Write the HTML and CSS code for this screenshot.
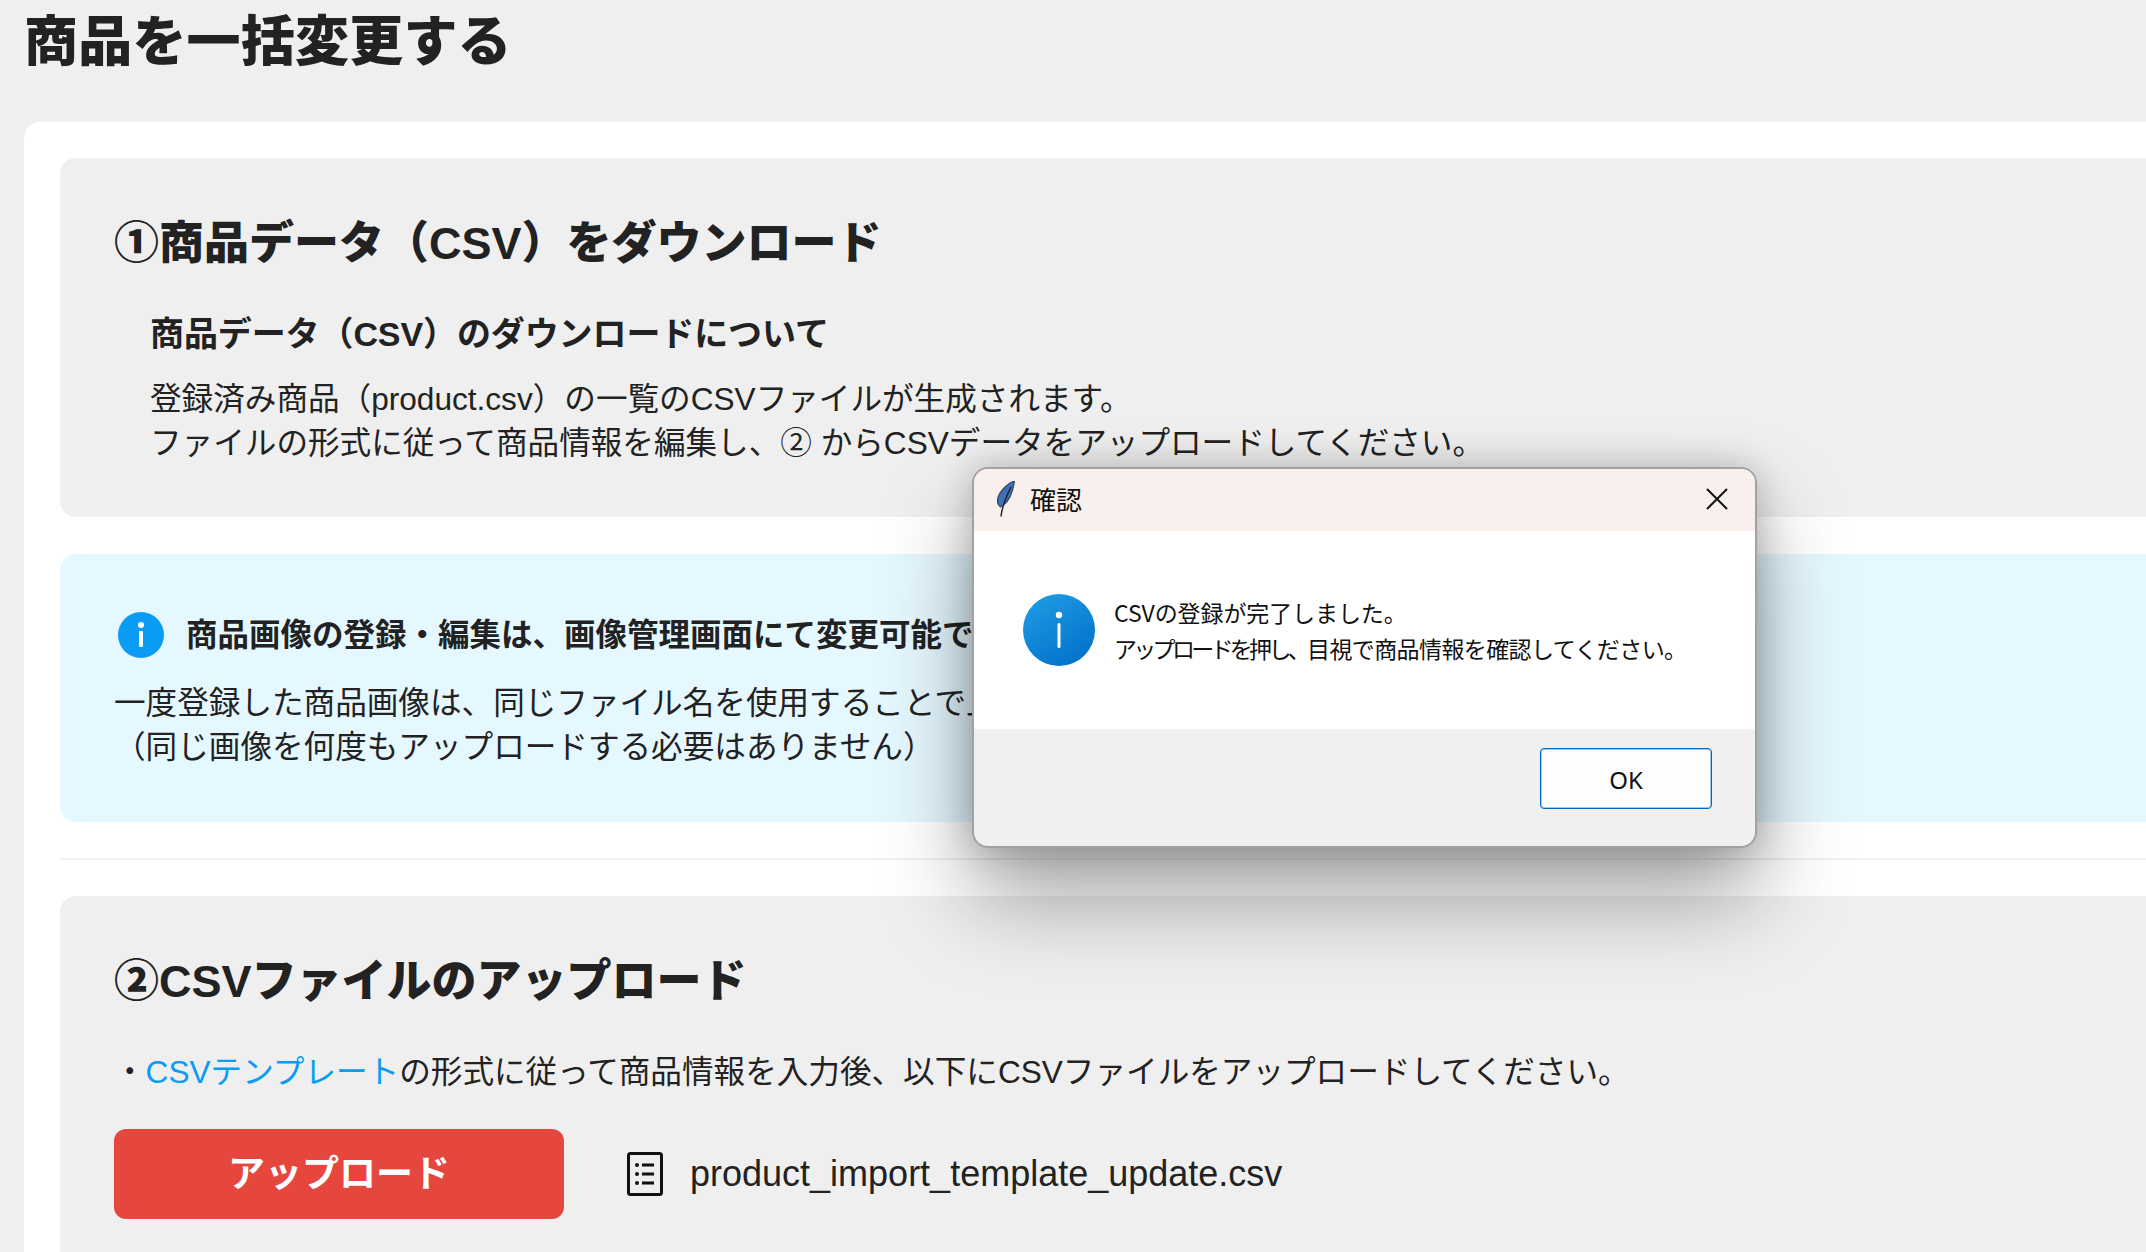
FILE: index.html
```html
<!DOCTYPE html>
<html lang="ja">
<head>
<meta charset="utf-8">
<title>商品を一括変更する</title>
<link rel="stylesheet" href="styles.css">
</head>
<body>
<div class="page">
  <h1 class="page-title">商品を一括変更する</h1>
  <main class="card">
    <section class="panel panel-download">
      <h2 class="panel-title">①商品データ（CSV）をダウンロード</h2>
      <div class="indent">
        <h3 class="sub-title">商品データ（CSV）のダウンロードについて</h3>
        <p class="body-text">登録済み商品（product.csv）の一覧のCSVファイルが生成されます。<br>ファイルの形式に従って商品情報を編集し、② からCSVデータをアップロードしてください。</p>
      </div>
    </section>
    <section class="notice">
      <div class="notice-head">
        <svg class="notice-icon" viewBox="0 0 46 46" aria-hidden="true"><circle cx="23" cy="23" r="23" fill="#0a9bf4"/><circle cx="23" cy="13" r="3" fill="#fff"/><rect x="21" y="19" width="4" height="16" rx="1" fill="#fff"/></svg>
        <strong class="notice-title">商品画像の登録・編集は、画像管理画面にて変更可能です。</strong>
      </div>
      <p class="body-text notice-text">一度登録した商品画像は、同じファイル名を使用することで上書きされます。<br>（同じ画像を何度もアップロードする必要はありません）</p>
    </section>
    <hr class="divider">
    <section class="panel panel-upload">
      <h2 class="panel-title">②CSVファイルのアップロード</h2>
      <p class="body-text upload-note"><span class="bullet">・</span><a class="link" href="#">CSVテンプレート</a>の形式に従って商品情報を入力後、以下にCSVファイルをアップロードしてください。</p>
      <div class="upload-row">
        <button class="upload-button" type="button">アップロード</button>
        <svg class="file-icon" viewBox="0 0 36 44" aria-hidden="true"><rect x="1.5" y="1.5" width="33" height="41" rx="2" fill="none" stroke="#111" stroke-width="3"/><g fill="#111"><circle cx="10" cy="13" r="2"/><circle cx="10" cy="22" r="2"/><circle cx="10" cy="31" r="2"/><rect x="15" y="11.5" width="12" height="3"/><rect x="15" y="20.5" width="12" height="3"/><rect x="15" y="29.5" width="12" height="3"/></g></svg>
        <span class="file-name">product_import_template_update.csv</span>
      </div>
    </section>
  </main>
</div>
<div class="dialog" role="dialog">
  <div class="dialog-titlebar">
    <svg class="feather" viewBox="0 0 18 36" aria-hidden="true"><path d="M17.500 0C14 1 11 3 8 6 3 11 0 16 .5 21c.2 2.500 1.500 4 3 5 1-1 2-1 3-2C12 20 16 10 17.500 0Z" fill="#3f70b8" stroke="#39465a" stroke-width="1.200"/><path d="M4 35.500C5 26 9 16 14 6" fill="none" stroke="#20242c" stroke-width="1.500"/></svg>
    <span class="dialog-title">確認</span>
    <svg class="close" viewBox="0 0 22 22" aria-hidden="true"><path d="M1 1 21 21M21 1 1 21" stroke="#111" stroke-width="2" fill="none"/></svg>
  </div>
  <div class="dialog-body">
    <svg class="dialog-icon" viewBox="0 0 72 72" aria-hidden="true"><defs><linearGradient id="infoGrad" x1="0.2" y1="0" x2="0.8" y2="1"><stop offset="0" stop-color="#1f9be3"/><stop offset="1" stop-color="#0270c9"/></linearGradient></defs><circle cx="36" cy="36" r="36" fill="url(#infoGrad)"/><circle cx="36" cy="21" r="3.200" fill="#fff"/><rect x="34.500" y="29" width="3" height="25" rx="1.500" fill="#fff"/></svg>
    <div class="dialog-text">
      <p class="dialog-line dialog-line-first">CSVの登録が完了しました。</p>
      <p class="dialog-line dialog-line-second"><span class="dialog-narrow">アップロードを押し、</span>目視で商品情報を確認してください。</p>
    </div>
  </div>
  <div class="dialog-footer">
    <button class="ok-button" type="button">OK</button>
  </div>
</div>
</body>
</html>
```

FILE: styles.css
```css
* { box-sizing: border-box; }
html, body { margin: 0; height: 100%; overflow: hidden; }
body {
  background: #efefef;
  color: #222;
  font-family: "Liberation Sans", "Noto Sans CJK JP", sans-serif;
  position: relative;
}
.page {
  height: 1252px;
  display: flex;
  flex-direction: column;
  padding: 12px 0 0 24px;
  overflow: hidden;
}
.page-title {
  margin: 0 0 50px;
  flex: none;
  font-size: 54px;
  line-height: 60px;
  letter-spacing: .2px;
  font-weight: 900;
}
.card {
  flex: 1;
  min-height: 0;
  display: flex;
  flex-direction: column;
  background: #fff;
  border-radius: 16px 0 0 0;
  padding: 36px 0 0 36px;
}
.panel { background: #efefef; padding: 58px 54px; }
.panel-download { padding-bottom: 52px; border-radius: 16px 0 0 16px; flex: none; }
.panel-upload { flex: 1; border-radius: 16px 0 0 0; }
.panel-title { margin: 0; font-size: 45px; line-height: 56px; font-weight: 900; }
.indent { padding-left: 36px; }
.sub-title { margin: 40px 0 0; font-size: 34px; line-height: 44px; letter-spacing: -.1px; font-weight: 700; }
.body-text { margin: 21px 0 0; font-size: 31.6px; line-height: 44px; font-weight: 400; white-space: nowrap; }
.notice {
  flex: none;
  background: #e5f7ff;
  border-radius: 16px 0 0 16px;
  margin-top: 37px;
  padding: 58px 54px 53px;
}
.notice-head { display: flex; align-items: center; gap: 22px; padding-left: 4px; height: 46px; }
.notice-icon { width: 46px; height: 46px; flex: none; }
.notice-title { font-size: 31.5px; line-height: 46px; font-weight: 700; white-space: nowrap; }
.notice-text { margin-top: 23px; }
.divider { flex: none; border: 0; height: 2px; background: #edf1f5; margin: 36px 0; }
.upload-note { margin-top: 40px; }
.link { color: #0a9bf4; text-decoration: none; }
.upload-row { display: flex; align-items: center; margin-top: 35px; }
.upload-button {
  width: 450px;
  height: 90px;
  background: #e5473f;
  color: #fff;
  border: 0;
  border-radius: 12px;
  font: 700 37px/1 "Liberation Sans", "Noto Sans CJK JP", sans-serif;
}
.file-icon { width: 36px; height: 44px; margin-left: 63px; flex: none; }
.file-name { margin-left: 27px; font-size: 36px; line-height: 44px; }

.dialog {
  position: absolute;
  left: 972px;
  top: 467px;
  width: 785px;
  height: 381px;
  display: flex;
  flex-direction: column;
  background: #f0f0f0;
  border: 2px solid #a2a2a2;
  border-radius: 16px;
  overflow: hidden;
  box-shadow: 0 50px 90px rgba(0, 0, 0, .36), 0 0 36px rgba(0, 0, 0, .22);
  font-family: "Noto Sans CJK JP", sans-serif;
  color: #111;
}
.dialog-titlebar {
  height: 62px;
  flex: none;
  display: flex;
  align-items: center;
  background: #f9f0ee;
  padding: 0 27px 2px 23px;
}
.feather { width: 18px; height: 36px; flex: none; }
.dialog-title { margin-left: 15px; font-size: 26px; line-height: 36px; }
.close { width: 22px; height: 22px; margin-left: auto; }
.dialog-body {
  height: 198px;
  flex: none;
  display: flex;
  align-items: center;
  background: #fff;
  padding-left: 49px;
}
.dialog-icon { width: 72px; height: 72px; flex: none; }
.dialog-text { margin-left: 19px; font-size: 23px; line-height: 36px; white-space: nowrap; }
.dialog-line { margin: 0; }
.dialog-line-first { letter-spacing: -.1px; }
.dialog-line-second { letter-spacing: -.6px; }
.dialog-narrow { letter-spacing: -3.7px; }
.dialog-footer { flex: 1; display: flex; justify-content: flex-end; align-items: flex-start; padding: 19px 43px 0 0; }
.ok-button {
  width: 172px;
  height: 61px;
  padding-top: 4px;
  background: #fdfdfd;
  border: 1px solid #0067c0;
  border-radius: 4px;
  box-shadow: inset 0 0 0 1px rgba(0, 103, 192, .35);
  color: #111;
  font: 400 24px/1 "Noto Sans", sans-serif;
}
```
